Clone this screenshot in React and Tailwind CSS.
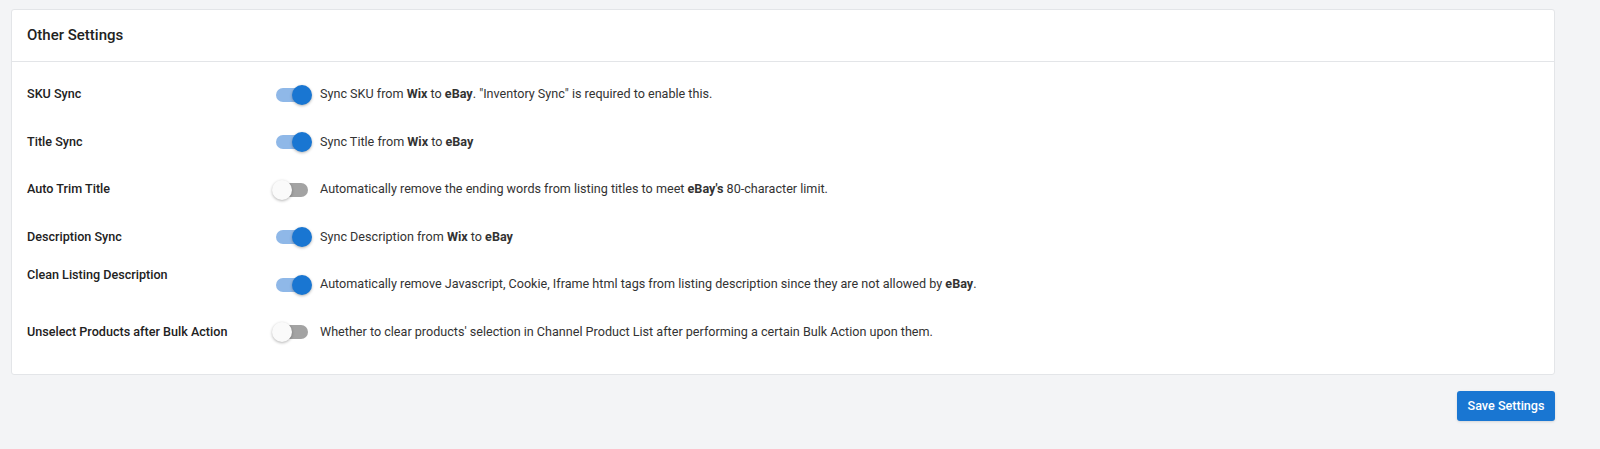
import React from 'react';

const rows = [
  {
    label: 'SKU Sync',
    on: true,
    text: <>Sync SKU from <b>Wix</b> to <b>eBay</b>. "Inventory Sync" is required to enable this.</>,
  },
  {
    label: 'Title Sync',
    on: true,
    text: <>Sync Title from <b>Wix</b> to <b>eBay</b></>,
  },
  {
    label: 'Auto Trim Title',
    on: false,
    text: <>Automatically remove the ending words from listing titles to meet <b>eBay's</b> 80-character limit.</>,
  },
  {
    label: 'Description Sync',
    on: true,
    text: <>Sync Description from <b>Wix</b> to <b>eBay</b></>,
  },
  {
    label: 'Clean Listing Description',
    on: true,
    top: true,
    text: <>Automatically remove Javascript, Cookie, Iframe html tags from listing description since they are not allowed by <b>eBay</b>.</>,
  },
  {
    label: 'Unselect Products after Bulk Action',
    on: false,
    text: <>Whether to clear products' selection in Channel Product List after performing a certain Bulk Action upon them.</>,
  },
];

function Toggle({ on }) {
  return (
    <div className="relative w-[40px] h-[20px] shrink-0">
      <div className={`absolute left-[4px] top-[3px] w-[32px] h-[14px] rounded-full ${on ? 'bg-[#8fb8e8]' : 'bg-[#a3a3a3]'}`} />
      <div
        className={`absolute top-0 w-[20px] h-[20px] rounded-full shadow-[0_1px_3px_rgba(0,0,0,0.3)] ${
          on ? 'left-[20px] bg-[#1976d2]' : 'left-0 bg-[#fafafa]'
        }`}
      />
    </div>
  );
}

export default function App() {
  return (
    <div className="w-[1600px] h-[449px] bg-[#f3f4f6] pt-[9px] pl-[11px] pr-[45px] font-['Roboto',sans-serif] text-[#333]">
      <div className="bg-white border border-[#e3e5e8] rounded-[3px]">
        <div className="h-[52px] flex items-center px-[15px] border-b border-[#e3e5e8]">
          <h2 className="text-[15px] font-medium text-[#222]">Other Settings</h2>
        </div>
        <div className="px-[15px] pt-[9px] pb-[18px] flex flex-col">
          {rows.map((r) => (
            <div key={r.label} className="flex items-center h-[47.5px]">
              <div className={`w-[245px] shrink-0 text-[12.6px] font-medium text-[#222] ${r.top ? 'self-start pt-[5px]' : ''}`}>
                {r.label}
              </div>
              <div className="flex items-center gap-[8px]">
                <Toggle on={r.on} />
                <span className="text-[12.6px] text-[#333]">{r.text}</span>
              </div>
            </div>
          ))}
        </div>
      </div>
      <div className="flex justify-end pt-[16px]">
        <button className="h-[30px] w-[98px] bg-[#1976d2] text-white text-[12.6px] font-medium rounded-[3px] shadow-sm">
          Save Settings
        </button>
      </div>
    </div>
  );
}
